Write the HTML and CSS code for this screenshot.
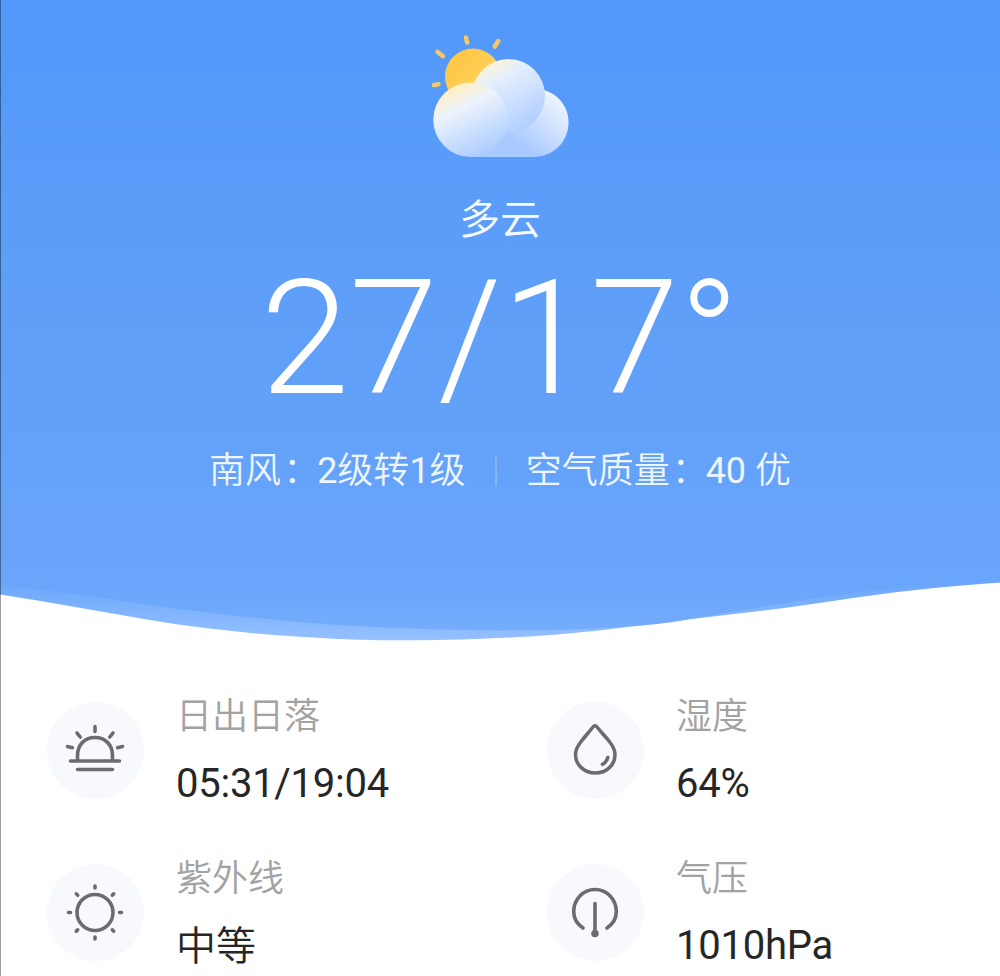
FILE: index.html
```html
<!DOCTYPE html>
<html lang="zh-CN">
<head>
<meta charset="utf-8">
<title>天气</title>
<link rel="stylesheet" href="styles.css">
</head>
<body>
<main class="page">
  <section class="hero">
    <svg class="hero-bg" viewBox="0 0 1000 645" aria-hidden="true">
      <defs>
        <linearGradient id="sky" x1="0" y1="0" x2="0" y2="632" gradientUnits="userSpaceOnUse">
          <stop offset="0" stop-color="#5298fa"/>
          <stop offset=".5" stop-color="#5f9ff8"/>
          <stop offset=".93" stop-color="#69a5fa"/>
          <stop offset="1" stop-color="#76adfc"/>
        </linearGradient>
        <linearGradient id="wave" x1="0" y1="580" x2="0" y2="640" gradientUnits="userSpaceOnUse">
          <stop offset="0" stop-color="#6ba6fb"/>
          <stop offset=".35" stop-color="#78affc"/>
          <stop offset=".8" stop-color="#8cbbff"/>
          <stop offset="1" stop-color="#96c0ff"/>
        </linearGradient>
      </defs>
      <path fill="url(#wave)" d="M0 500V594.500C50 602 100 611.500 150 620S250 633.500 300 636.700S370 640.300 415 640.300S510 638 550 635S620 628 667 622S780 609.500 833 601S940 587 1000 582.500V500Z"/>
      <path fill="url(#sky)" d="M0 0V585C30 588 60 592 87 596S155 605.500 187 610S290 622 333 624.700S440 630 500 630.500S590 629 630 626.300S680 620.500 705 616.500S795 601.500 833 595.500S930 585.500 1000 582V0Z"/>
    </svg>
    <svg class="weather-icon" viewBox="430 34 140 126" role="img" aria-label="多云">
      <defs>
        <linearGradient id="sun" x1="0" y1="0" x2="1" y2="1">
          <stop offset="0" stop-color="#ffc53f"/><stop offset="1" stop-color="#ffd668"/>
        </linearGradient>
        <linearGradient id="front" x1="460" y1="83" x2="494" y2="152" gradientUnits="userSpaceOnUse">
          <stop offset="0" stop-color="#fff0c0"/><stop offset=".3" stop-color="#edf3fd"/><stop offset=".65" stop-color="#cadfff"/><stop offset="1" stop-color="#a9caff"/>
        </linearGradient>
        <linearGradient id="middle" x1="482" y1="70" x2="518" y2="134" gradientUnits="userSpaceOnUse">
          <stop offset="0" stop-color="#f8f3dc"/><stop offset=".22" stop-color="#e4eefd"/><stop offset=".6" stop-color="#cbdfff"/><stop offset="1" stop-color="#aecdff"/>
        </linearGradient>
        <linearGradient id="back" x1="558" y1="92" x2="518" y2="143" gradientUnits="userSpaceOnUse">
          <stop offset="0" stop-color="#f4f8ff"/><stop offset=".5" stop-color="#cfe1ff"/><stop offset="1" stop-color="#a9caff"/>
        </linearGradient>
      </defs>
      <g stroke="#f5c965" stroke-width="4.500" stroke-linecap="round">
        <path d="M466 37.500L467.200 42.500M498.200 41L494.800 46.500M437.500 52L443 56.200M434 85L438.500 84.200"/>
      </g>
      <circle cx="473" cy="76.500" r="28" fill="url(#sun)"/>
      <path fill="url(#back)" d="M533 88.500C553 88.500 568.500 103 568.500 122.500S553 157 533 157H470V138L500 95Z"/>
      <circle cx="508.500" cy="95.500" r="36.500" fill="url(#middle)"/>
      <circle cx="470.500" cy="119.750" r="37.250" fill="url(#front)"/>
    </svg>
    <h1 class="condition">多云</h1>
    <p class="temperature">27/17°</p>
    <div class="summary">
      <span>南风<span class="colon">：</span><span class="num">2</span>级转<span class="num">1</span>级</span>
      <i class="divider"></i>
      <span>空气质量<span class="colon">：</span><span class="num">40</span> 优</span>
    </div>
  </section>

  <section class="details">
    <article class="detail">
      <svg class="badge" viewBox="-48 -48.500 97 97">
        <g class="line" stroke-width="3.600">
          <path d="M-17.500 9V5C-17.500-6-10-13 0-13S17.500-6 17.500 5V9M-24.500 10.500H24.500M-17.500 19H17.500"/>
          <path d="M0-24V-19M-18-17.500L-14.800-13.500M18-17.500L14.800-13.500M-27.500-4L-22.500-2.800M27.500-4L22.500-2.800"/>
        </g>
      </svg>
      <div class="copy"><h2>日出日落</h2><p>05:31/19:04</p></div>
    </article>
    <article class="detail">
      <svg class="badge" viewBox="-48 -48.500 97 97">
        <g class="line" stroke-width="3.600">
          <path d="M-2-23.500Q0-26 2-23.500C6-18.500 10-14.500 14-9.500C18-4.500 20-1 20 4C20 15 11 22.500 0.500 22.500S-19.500 15-19.500 4C-19.500-1-17.500-4.500-13.500-9.500C-9.500-14.500-6-18.500-2-23.500Z"/>
          <path d="M12.800 7Q11.500 12 7.500 13.800"/>
        </g>
      </svg>
      <div class="copy"><h2>湿度</h2><p>64%</p></div>
    </article>
    <article class="detail">
      <svg class="badge" viewBox="-48 -48.500 97 97">
        <g class="line" stroke-width="3.600">
          <circle r="18"/>
          <path d="M0-26.500V-24.500M0 24.500V26.500M-26.500 0H-24.500M24.500 0H26.500M-18.700-18.700L-17.300-17.300M18.700-18.700L17.300-17.300M-18.700 18.700L-17.300 17.300M18.700 18.700L17.300 17.300"/>
        </g>
      </svg>
      <div class="copy"><h2>紫外线</h2><p class="cjk">中等</p></div>
    </article>
    <article class="detail">
      <svg class="badge" viewBox="-48 -48.500 97 97">
        <g class="line" stroke-width="3.600">
          <path d="M-12 15.500C-18 11.500-21.300 6-21.300-1C-21.300-13-12-23 0-23S21.300-13 21.300-1C21.300 6 18 11.500 12 15.500M0-9V21"/>
          <circle cy="21" r="2"/>
        </g>
      </svg>
      <div class="copy"><h2>气压</h2><p>1010hPa</p></div>
    </article>
  </section>
</main>
</body>
</html>
```
FILE: styles.css
```css
* { box-sizing: border-box; }
body, h1, h2, p { margin: 0; font-weight: 400; }
body {
  background: #fff;
  font-family: Roboto, "Noto Sans CJK SC", sans-serif;
}
.page {
  position: relative;
  width: 1000px;
  height: 976px;
  overflow: hidden;
}
.page::before {
  content: "";
  position: absolute;
  z-index: 2;
  inset: 0 auto 0 0;
  width: 1px;
  background: rgba(0, 0, 0, .38);
}
.hero {
  position: relative;
  z-index: 0;
  display: flex;
  flex-direction: column;
  align-items: center;
  height: 645px;
  padding-top: 34px;
  color: #fff;
}
.hero-bg {
  position: absolute;
  z-index: -1;
  top: 0;
  left: 0;
  width: 1000px;
  height: 645px;
}
.weather-icon { width: 140px; height: 126px; }
.condition {
  margin-top: 30px;
  font-family: "Noto Sans CJK SC", "Noto Sans CJK SC DemiLight", sans-serif;
  font-size: 41px;
  line-height: 52px;
  font-weight: 350;
  color: #f5faff;
}
.temperature {
  margin-top: 17px;
  font-size: 160px;
  line-height: 160px;
  font-weight: 300;
}
.summary {
  display: flex;
  align-items: center;
  margin-top: 25px;
  font-size: 36px;
  line-height: 54px;
  font-weight: 350;
  color: #edf5ff;
  white-space: pre;
}
.num { font-weight: 400; }
.colon {
  display: inline-block;
  width: 36px;
  text-indent: 2px;
}
.divider {
  width: 2px;
  height: 30px;
  margin: 0 29px;
  background: rgba(255, 255, 255, .22);
}
.details {
  display: grid;
  grid-template-columns: 500px 500px;
  grid-auto-rows: 162px;
  padding-top: 48px;
}
.detail { display: flex; padding-left: 47px; }
.badge {
  width: 97px;
  height: 97px;
  margin-top: 9px;
  border-radius: 50%;
  background: #f7f9fc;
}
.line {
  fill: none;
  stroke: #6b6c6e;
  stroke-linecap: round;
  stroke-linejoin: round;
}
.copy { margin-left: 32px; }
.copy h2 {
  font-size: 36px;
  line-height: 48px;
  font-weight: 350;
  color: #a2a2a2;
}
.copy p {
  margin-top: 15px;
  font-size: 40px;
  line-height: 56px;
  letter-spacing: -.25px;
  color: #262626;
}
.copy .cjk { margin-top: 16px; letter-spacing: 0; font-weight: 350; }
```
